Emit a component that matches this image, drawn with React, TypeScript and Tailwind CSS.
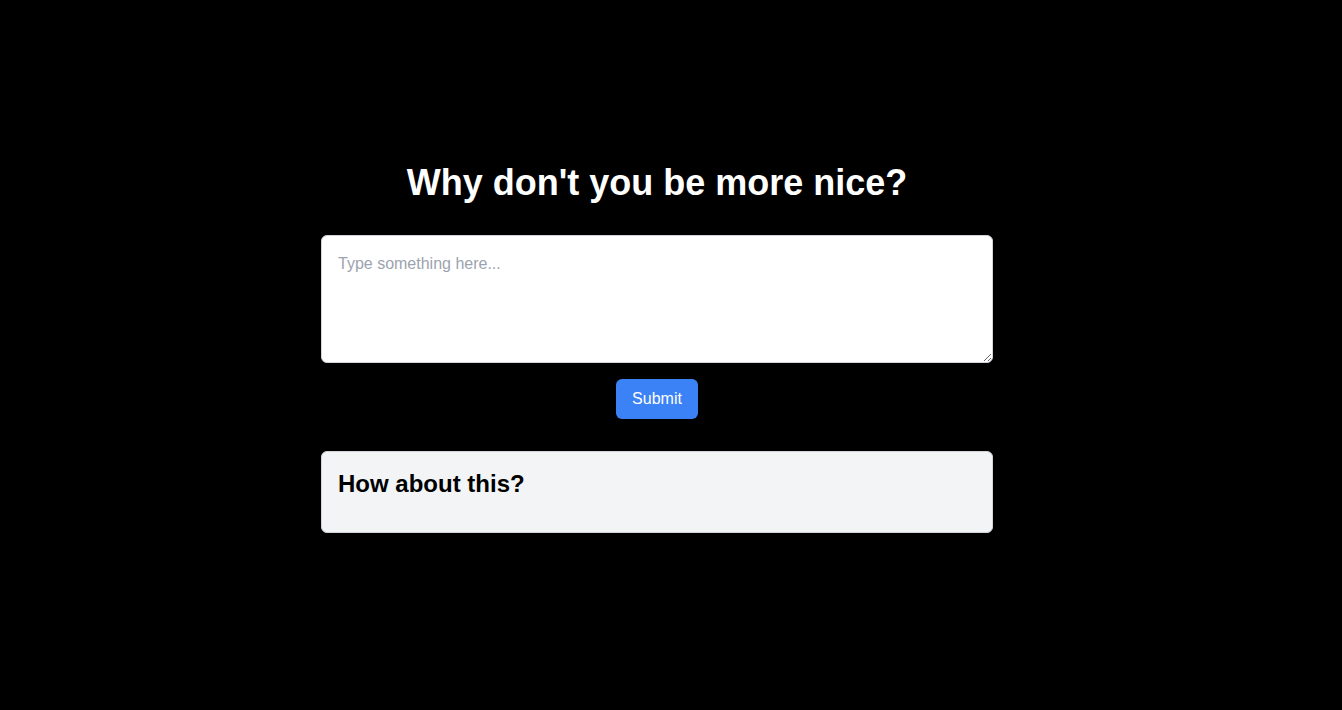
import React, { useState } from "react";

export default function App() {
  const [text, setText] = useState("");

  return (
    <div
      className="flex min-h-screen flex-col items-center bg-black pr-7 pt-[163px]"
      style={{ fontFamily: "Arial, 'Liberation Sans', sans-serif" }}
    >
      <div className="w-full max-w-2xl">
        <h1 className="mb-8 text-center text-4xl font-bold text-white">
          Why don't you be more nice?
        </h1>
        <textarea
          value={text}
          onChange={(e) => setText(e.target.value)}
          placeholder="Type something here..."
          className="block h-32 w-full rounded-md border border-[#d1d5db] bg-white p-4 text-base text-black placeholder:text-[#9ca3af] focus:outline-none"
        />
        <div className="mt-4 flex justify-center">
          <button
            type="button"
            className="rounded-md bg-[#3b82f6] px-4 py-2 text-base text-white hover:bg-[#2563eb]"
          >
            Submit
          </button>
        </div>
        <div className="mt-8 rounded-md border border-[#d1d5db] bg-[#f3f4f6] p-4">
          <h2 className="mb-4 text-2xl font-bold text-black">How about this?</h2>
        </div>
      </div>
    </div>
  );
}
